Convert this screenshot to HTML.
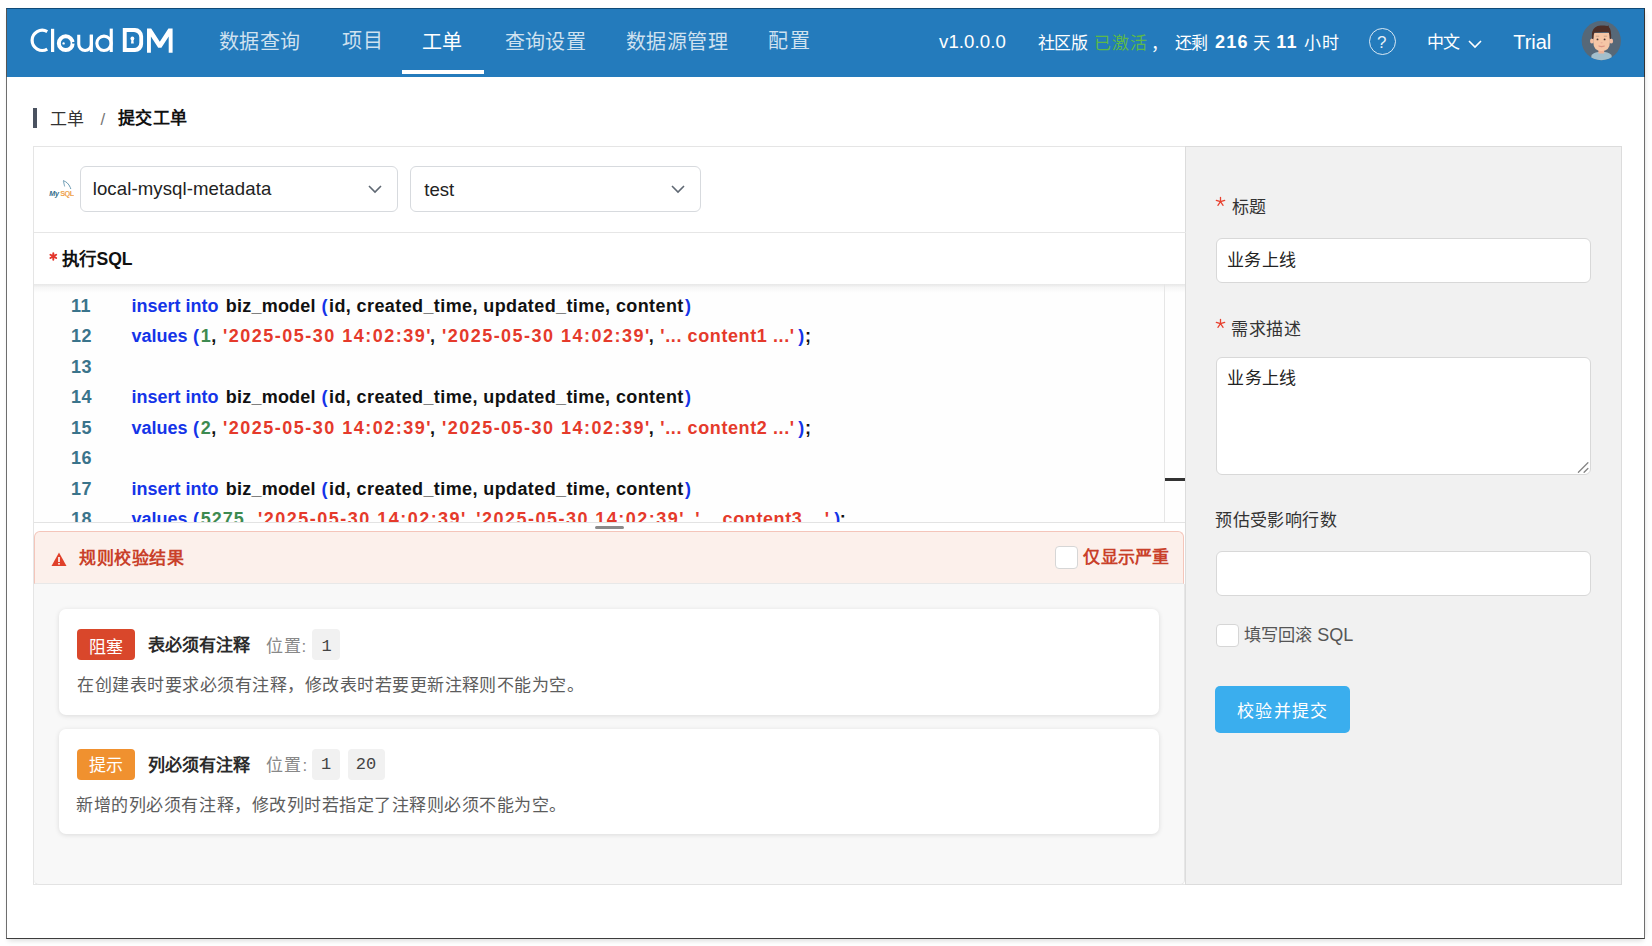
<!DOCTYPE html>
<html lang="zh-CN"><head><meta charset="utf-8">
<style>
*{box-sizing:border-box;margin:0;padding:0}
html,body{width:1652px;height:946px;overflow:hidden;background:#fff;font-family:"Liberation Sans",sans-serif;color:#222}
.a{position:absolute;white-space:nowrap;line-height:1}
.r{position:absolute}
</style></head><body>
<div class="r" style="left:6px;top:8px;width:1639px;height:931px;border:1px solid #6e6e6e;border-bottom:1.6px solid #3c3c3c;background:#fff;box-shadow:0 4px 5px -2px rgba(0,0,0,.13), 3px 0 5px -3px rgba(0,0,0,.1)"></div>
<div class="r" style="left:6px;top:8px;width:1639px;height:69px;background:#247bbc;border-top:1px solid #0f4a78;border-left:1px solid #555;border-right:1px solid #333"></div>
<svg class="a" style="left:28px;top:24px" width="152" height="32" viewBox="28 24 152 32">
<g fill="none" stroke="#fff">
<path d="M47.25 31.55 A10.1 10.1 0 1 0 47.25 49.05" stroke-width="3.2"/>
<circle cx="65.75" cy="43.2" r="6.9" stroke-width="4"/>
<path d="M78.75 34.7 V44.2 A6.3 6.3 0 0 0 91.35 44.2 V34.7" stroke-width="3.1"/>
<circle cx="104" cy="43.3" r="7.15" stroke-width="3.1"/>
</g>
<g fill="#fff">
<rect x="51" y="28.8" width="3.2" height="23.2"/>
<rect x="89.8" y="34.7" width="3.1" height="17.3"/>
<rect x="109.7" y="28.6" width="3.1" height="23.4"/>
<circle cx="63.6" cy="43.4" r="1.2"/>
<path fill-rule="evenodd" d="M122.8 28.1 H135 A8.1 8.1 0 0 1 143.1 36.2 V43.9 A8.1 8.1 0 0 1 135 52 H122.8 Z M126.7 32 H134 A5.3 5.3 0 0 1 139.3 37.3 V42.7 A5.3 5.3 0 0 1 134 48 H126.7 Z"/>
<circle cx="132.4" cy="38.5" r="1.9"/>
<path d="M131.5 39 H133.3 L133.8 43.6 H131 Z"/>
<path d="M147 52.8 V28.6 H151.2 L159.8 41.8 L168.4 28.6 H172.6 V52.8 H168.7 V36.5 L161.4 47.8 H158.2 L150.9 36.5 V52.8 Z"/>
</g>
<rect x="72.2" y="42" width="3" height="1.6" fill="#247bbc"/>
</svg>
<div class="a" style="left:218.66px;top:31.63px;font-size:20px;color:rgba(255,255,255,.78);font-weight:normal;letter-spacing:0.587px;">数据查询</div>
<div class="a" style="left:341.82px;top:31.23px;font-size:20px;color:rgba(255,255,255,.78);font-weight:normal;letter-spacing:0.960px;">项目</div>
<div class="a" style="left:422.48px;top:31.63px;font-size:20px;color:#fff;font-weight:normal;letter-spacing:-0.160px;">工单</div>
<div class="a" style="left:504.56px;top:31.63px;font-size:20px;color:rgba(255,255,255,.78);font-weight:normal;letter-spacing:0.320px;">查询设置</div>
<div class="a" style="left:625.94px;top:31.63px;font-size:20px;color:rgba(255,255,255,.78);font-weight:normal;letter-spacing:0.480px;">数据源管理</div>
<div class="a" style="left:768.48px;top:31.23px;font-size:20px;color:rgba(255,255,255,.78);font-weight:normal;letter-spacing:1.280px;">配置</div>
<div class="r" style="left:402px;top:70px;width:82px;height:4px;background:#fff"></div>
<div class="a" style="left:939.00px;top:33.36px;font-size:18.6px;color:#fff;font-weight:normal;letter-spacing:0.1px">v1.0.0.0</div>
<div class="a" style="left:1037.54px;top:35.07px;font-size:17px;color:#fff;font-weight:normal;letter-spacing:-0.160px;">社区版</div>
<div class="a" style="left:1094.12px;top:35.07px;font-size:17px;color:#5cb84a;font-weight:normal;letter-spacing:0.720px;">已激活</div>
<div class="a" style="left:1150.80px;top:35.71px;font-size:17px;color:#fff;font-weight:normal;">，</div>
<div class="a" style="left:1174.72px;top:35.47px;font-size:17px;color:#fff;font-weight:normal;letter-spacing:-0.480px;">还剩</div>
<div class="a" style="left:1215.00px;top:33.46px;font-size:18px;color:#fff;font-weight:bold;letter-spacing:1.3px">216</div>
<div class="a" style="left:1252.66px;top:34.50px;font-size:17.2px;color:#fff;font-weight:normal;">天</div>
<div class="a" style="left:1276.30px;top:33.46px;font-size:18px;color:#fff;font-weight:bold;letter-spacing:1.3px">11</div>
<div class="a" style="left:1304.00px;top:35.47px;font-size:17px;color:#fff;font-weight:normal;letter-spacing:0.640px;">小时</div>
<div class="r" style="left:1368.5px;top:27.8px;width:27.4px;height:27.4px;border:1.7px solid rgba(255,255,255,.82);border-radius:50%"></div>
<div class="a" style="left:1377.00px;top:33.61px;font-size:17px;color:rgba(255,255,255,.9);font-weight:normal;">?</div>
<div class="a" style="left:1426.56px;top:33.95px;font-size:17px;color:#fff;font-weight:normal;letter-spacing:-0.480px;">中文</div>
<svg class="a" style="left:1466px;top:37.5px" width="18" height="12" viewBox="0 0 18 12"><path d="M3 3 L9 9 L15 3" fill="none" stroke="#fff" stroke-width="1.6"/></svg>
<div class="a" style="left:1513.18px;top:31.53px;font-size:20px;color:#fff;font-weight:normal;">Trial</div>
<svg class="a" style="left:1581px;top:21px" width="40" height="40" viewBox="0 0 40 40">
<defs><clipPath id="cc"><circle cx="20.3" cy="19.7" r="19.6"/></clipPath></defs>
<circle cx="20.3" cy="19.7" r="19.6" fill="#566878"/>
<g clip-path="url(#cc)">
<path d="M9.5 40 L10.5 34.5 Q12 31.5 17 31 H24 Q29 31.5 30.5 34.5 L31.5 40 Z" fill="#a3bfcc"/>
<rect x="17.4" y="26" width="5.8" height="6.5" fill="#eeb296"/>
<ellipse cx="10.9" cy="20" rx="1.9" ry="2.6" fill="#f3bfa3"/>
<ellipse cx="30.2" cy="20" rx="1.9" ry="2.6" fill="#f3bfa3"/>
<path d="M12.4 12 H28.8 V22 Q28.8 29.9 20.6 29.9 Q12.4 29.9 12.4 22 Z" fill="#f6c6a6"/>
<path d="M11 18 Q10.2 9 14 6.5 Q17 4 21 4.6 Q24 4 26.5 5 L27.5 4.2 L28 6.3 Q30.6 8.5 30.1 18 L28.7 17.5 Q28.5 12.5 27.5 11 Q20 10.6 13.5 11.5 Q12.6 13 12.4 17.5 Z" fill="#4d2e27"/>
<path d="M14.8 15.2 H18.2 M22.8 15.2 H26.2" stroke="#c4a08a" stroke-width="0.9"/>
<circle cx="16.5" cy="18.4" r="0.95" fill="#4a3530"/><circle cx="23.6" cy="18.4" r="0.95" fill="#4a3530"/>
<ellipse cx="20.6" cy="21.8" rx="1.1" ry="0.8" fill="#eab09a"/>
<path d="M17.6 25 Q20.6 26.8 23.6 25 Q20.6 25.7 17.6 25 Z" fill="#d98f7f" stroke="#d98f7f" stroke-width="0.6"/>
</g></svg>
<div class="r" style="left:33px;top:108px;width:4.4px;height:20px;background:#4a5260"></div>
<div class="a" style="left:49.64px;top:110.71px;font-size:17px;color:#333;font-weight:normal;letter-spacing:0.000px;">工单</div>
<div class="a" style="left:100.50px;top:111.11px;font-size:17px;color:#777;font-weight:normal;">/</div>
<div class="a" style="left:118.00px;top:110.43px;font-size:17px;color:#111;font-weight:bold;letter-spacing:0.320px;">提交工单</div>
<div class="r" style="left:33px;top:146px;width:1153px;height:739px;border:1px solid #e5e5e5;border-right:none;background:#fff"></div>
<div class="r" style="left:1185px;top:146px;width:437px;height:739px;background:#f1f1f1;border:1px solid #dcdcdc"></div>
<svg class="a" style="left:48px;top:178px" width="26" height="22" viewBox="0 0 26 22">
<text x="1.3" y="17.8" font-family="Liberation Sans" font-size="7.2" font-style="italic" font-weight="bold" fill="#2f6d8c" letter-spacing="-0.3">My</text>
<text x="12.2" y="17.8" font-family="Liberation Sans" font-size="7.4" font-weight="bold" fill="#eea24e" letter-spacing="-0.5">SQL</text>
<path d="M15 2.6 Q20 4 22.3 9.5 L22.8 11" fill="none" stroke="#6a9ab3" stroke-width="1"/>
<path d="M15.3 3 Q16 5.5 16.7 8.5" fill="none" stroke="#8fb3c6" stroke-width="1.1"/>
</svg>
<div class="r" style="left:80px;top:166px;width:318px;height:46px;border:1px solid #d7dade;border-radius:6px;background:#fff"></div>
<div class="a" style="left:92.66px;top:180.30px;font-size:18.6px;color:#222;font-weight:normal;letter-spacing:0.1px">local-mysql-metadata</div>
<svg class="a" style="left:366px;top:182px" width="18" height="14" viewBox="0 0 18 14"><path d="M3 4 L9 10 L15 4" fill="none" stroke="#5f6873" stroke-width="1.6"/></svg>
<div class="r" style="left:410px;top:166px;width:291px;height:46px;border:1px solid #d7dade;border-radius:6px;background:#fff"></div>
<div class="a" style="left:424.26px;top:180.98px;font-size:18.6px;color:#222;font-weight:normal;">test</div>
<svg class="a" style="left:669px;top:182px" width="18" height="14" viewBox="0 0 18 14"><path d="M3 4 L9 10 L15 4" fill="none" stroke="#5f6873" stroke-width="1.6"/></svg>
<div class="r" style="left:34px;top:232px;width:1152px;height:1px;background:#e6e6e6"></div>
<svg class="a" style="left:0;top:0" width="1652" height="946" viewBox="0 0 1652 946"><path d="M53.30 256.40 L53.30 253.10 M53.30 256.40 L56.16 254.75 M53.30 256.40 L56.16 258.05 M53.30 256.40 L53.30 259.70 M53.30 256.40 L50.44 258.05 M53.30 256.40 L50.44 254.75 " stroke="#e3352b" stroke-width="1.9" stroke-linecap="round" fill="none"/></svg>
<div class="a" style="left:62.46px;top:251.11px;font-size:17.5px;color:#111;font-weight:bold;">执行<span style="font-size:17.6px">SQL</span></div>
<div class="r" style="left:34px;top:284px;width:1151px;height:239px;background:#fefefe;border-bottom:1px solid #e3e3e3;overflow:hidden">
<div class="r" style="left:0;top:0;width:1151px;height:9px;background:linear-gradient(rgba(0,0,0,.09),rgba(0,0,0,.03) 40%,rgba(0,0,0,0))"></div>
<div class="r" style="left:1130px;top:0;width:1px;height:239px;background:#e6e6e6"></div>
<div class="r" style="left:1131px;top:194px;width:20px;height:2.5px;background:#333"></div>
<div class="a" style="left:37.00px;top:12.86px;font-size:18px;color:#3a748b;font-weight:bold;letter-spacing:0.5px">11</div>
<div class="a" style="left:97.40px;top:12.86px;font-size:18px;color:#1434e8;font-weight:bold;letter-spacing:0px">insert into</div>
<div class="a" style="left:191.80px;top:12.86px;font-size:18px;color:#111;font-weight:bold;letter-spacing:0.22px">biz_model</div>
<div class="a" style="left:287.50px;top:12.86px;font-size:18px;color:#1434e8;font-weight:bold;letter-spacing:0px">(</div>
<div class="a" style="left:295.00px;top:12.86px;font-size:18px;color:#111;font-weight:bold;letter-spacing:0.4px">id, created_time, updated_time, content</div>
<div class="a" style="left:651.00px;top:12.86px;font-size:18px;color:#1434e8;font-weight:bold;letter-spacing:0px">)</div>
<div class="a" style="left:37.00px;top:43.31px;font-size:18px;color:#3a748b;font-weight:bold;letter-spacing:0.5px">12</div>
<div class="a" style="left:97.40px;top:43.31px;font-size:18px;color:#1434e8;font-weight:bold;letter-spacing:0px">values</div>
<div class="a" style="left:159.00px;top:43.31px;font-size:18px;color:#1434e8;font-weight:bold;letter-spacing:0px">(</div>
<div class="a" style="left:166.80px;top:43.31px;font-size:18px;color:#3d8a50;font-weight:bold;letter-spacing:0px">1</div>
<div class="a" style="left:177.30px;top:43.31px;font-size:18px;color:#111;font-weight:bold;letter-spacing:0px">,</div>
<div class="a" style="left:189.10px;top:43.31px;font-size:18px;color:#e53a2b;font-weight:bold;letter-spacing:1.485px">'2025-05-30 14:02:39'</div>
<div class="a" style="left:395.90px;top:43.31px;font-size:18px;color:#111;font-weight:bold;letter-spacing:0px">,</div>
<div class="a" style="left:407.90px;top:43.31px;font-size:18px;color:#e53a2b;font-weight:bold;letter-spacing:1.485px">'2025-05-30 14:02:39'</div>
<div class="a" style="left:614.70px;top:43.31px;font-size:18px;color:#111;font-weight:bold;letter-spacing:0px">,</div>
<div class="a" style="left:626.30px;top:43.31px;font-size:18px;color:#e53a2b;font-weight:bold;letter-spacing:0.6px">'... content1 ...'</div>
<div class="a" style="left:764.30px;top:43.31px;font-size:18px;color:#1434e8;font-weight:bold;letter-spacing:0px">)</div>
<div class="a" style="left:770.90px;top:43.31px;font-size:18px;color:#111;font-weight:bold;letter-spacing:0px">;</div>
<div class="a" style="left:37.00px;top:73.76px;font-size:18px;color:#3a748b;font-weight:bold;letter-spacing:0.5px">13</div>
<div class="a" style="left:37.00px;top:104.21px;font-size:18px;color:#3a748b;font-weight:bold;letter-spacing:0.5px">14</div>
<div class="a" style="left:97.40px;top:104.21px;font-size:18px;color:#1434e8;font-weight:bold;letter-spacing:0px">insert into</div>
<div class="a" style="left:191.80px;top:104.21px;font-size:18px;color:#111;font-weight:bold;letter-spacing:0.22px">biz_model</div>
<div class="a" style="left:287.50px;top:104.21px;font-size:18px;color:#1434e8;font-weight:bold;letter-spacing:0px">(</div>
<div class="a" style="left:295.00px;top:104.21px;font-size:18px;color:#111;font-weight:bold;letter-spacing:0.4px">id, created_time, updated_time, content</div>
<div class="a" style="left:651.00px;top:104.21px;font-size:18px;color:#1434e8;font-weight:bold;letter-spacing:0px">)</div>
<div class="a" style="left:37.00px;top:134.66px;font-size:18px;color:#3a748b;font-weight:bold;letter-spacing:0.5px">15</div>
<div class="a" style="left:97.40px;top:134.66px;font-size:18px;color:#1434e8;font-weight:bold;letter-spacing:0px">values</div>
<div class="a" style="left:159.00px;top:134.66px;font-size:18px;color:#1434e8;font-weight:bold;letter-spacing:0px">(</div>
<div class="a" style="left:166.80px;top:134.66px;font-size:18px;color:#3d8a50;font-weight:bold;letter-spacing:0px">2</div>
<div class="a" style="left:177.30px;top:134.66px;font-size:18px;color:#111;font-weight:bold;letter-spacing:0px">,</div>
<div class="a" style="left:189.10px;top:134.66px;font-size:18px;color:#e53a2b;font-weight:bold;letter-spacing:1.485px">'2025-05-30 14:02:39'</div>
<div class="a" style="left:395.90px;top:134.66px;font-size:18px;color:#111;font-weight:bold;letter-spacing:0px">,</div>
<div class="a" style="left:407.90px;top:134.66px;font-size:18px;color:#e53a2b;font-weight:bold;letter-spacing:1.485px">'2025-05-30 14:02:39'</div>
<div class="a" style="left:614.70px;top:134.66px;font-size:18px;color:#111;font-weight:bold;letter-spacing:0px">,</div>
<div class="a" style="left:626.30px;top:134.66px;font-size:18px;color:#e53a2b;font-weight:bold;letter-spacing:0.6px">'... content2 ...'</div>
<div class="a" style="left:764.30px;top:134.66px;font-size:18px;color:#1434e8;font-weight:bold;letter-spacing:0px">)</div>
<div class="a" style="left:770.90px;top:134.66px;font-size:18px;color:#111;font-weight:bold;letter-spacing:0px">;</div>
<div class="a" style="left:37.00px;top:165.11px;font-size:18px;color:#3a748b;font-weight:bold;letter-spacing:0.5px">16</div>
<div class="a" style="left:37.00px;top:195.56px;font-size:18px;color:#3a748b;font-weight:bold;letter-spacing:0.5px">17</div>
<div class="a" style="left:97.40px;top:195.56px;font-size:18px;color:#1434e8;font-weight:bold;letter-spacing:0px">insert into</div>
<div class="a" style="left:191.80px;top:195.56px;font-size:18px;color:#111;font-weight:bold;letter-spacing:0.22px">biz_model</div>
<div class="a" style="left:287.50px;top:195.56px;font-size:18px;color:#1434e8;font-weight:bold;letter-spacing:0px">(</div>
<div class="a" style="left:295.00px;top:195.56px;font-size:18px;color:#111;font-weight:bold;letter-spacing:0.4px">id, created_time, updated_time, content</div>
<div class="a" style="left:651.00px;top:195.56px;font-size:18px;color:#1434e8;font-weight:bold;letter-spacing:0px">)</div>
<div class="a" style="left:37.00px;top:226.01px;font-size:18px;color:#3a748b;font-weight:bold;letter-spacing:0.5px">18</div>
<div class="a" style="left:97.40px;top:226.01px;font-size:18px;color:#1434e8;font-weight:bold;letter-spacing:0px">values</div>
<div class="a" style="left:159.00px;top:226.01px;font-size:18px;color:#1434e8;font-weight:bold;letter-spacing:0px">(</div>
<div class="a" style="left:166.80px;top:226.01px;font-size:18px;color:#3d8a50;font-weight:bold;letter-spacing:1px">5275</div>
<div class="a" style="left:212.50px;top:226.01px;font-size:18px;color:#111;font-weight:bold;letter-spacing:0px">,</div>
<div class="a" style="left:224.00px;top:226.01px;font-size:18px;color:#e53a2b;font-weight:bold;letter-spacing:1.485px">'2025-05-30 14:02:39'</div>
<div class="a" style="left:430.80px;top:226.01px;font-size:18px;color:#111;font-weight:bold;letter-spacing:0px">,</div>
<div class="a" style="left:442.20px;top:226.01px;font-size:18px;color:#e53a2b;font-weight:bold;letter-spacing:1.485px">'2025-05-30 14:02:39'</div>
<div class="a" style="left:649.00px;top:226.01px;font-size:18px;color:#111;font-weight:bold;letter-spacing:0px">,</div>
<div class="a" style="left:661.30px;top:226.01px;font-size:18px;color:#e53a2b;font-weight:bold;letter-spacing:0.6px">'... content3 ...'</div>
<div class="a" style="left:800.20px;top:226.01px;font-size:18px;color:#1434e8;font-weight:bold;letter-spacing:0px">)</div>
<div class="a" style="left:805.70px;top:226.01px;font-size:18px;color:#111;font-weight:bold;letter-spacing:0px">;</div>
</div>
<div class="r" style="left:594.5px;top:525.5px;width:29px;height:3px;border-radius:2px;background:#8a8a8a"></div>
<div class="r" style="left:34px;top:531px;width:1150px;height:53px;background:#fcf0eb;border:1.5px solid #f4c5ba;border-bottom:1px solid #e8e8e8;border-radius:6px 6px 0 0"></div>
<svg class="a" style="left:51px;top:551px" width="16" height="16" viewBox="0 0 16 16"><path d="M8 1.5 L15.5 15 H0.5 Z" fill="#e0402a"/><rect x="7.2" y="6" width="1.6" height="5" fill="#fff"/><rect x="7.2" y="12" width="1.6" height="1.6" fill="#fff"/></svg>
<div class="a" style="left:79.28px;top:550.31px;font-size:17px;color:#c9402a;font-weight:bold;letter-spacing:0.512px;">规则校验结果</div>
<div class="r" style="left:1055px;top:546px;width:23px;height:23px;border:1px solid #d6d6d6;border-radius:4px;background:#fff"></div>
<div class="a" style="left:1083.28px;top:549.23px;font-size:17px;color:#c9402a;font-weight:bold;letter-spacing:0.280px;">仅显示严重</div>
<div class="r" style="left:34px;top:584px;width:1150.5px;height:301px;background:#f8f8f8;border-bottom:1px solid #e3e3e3;border-right:1px solid #e6e6e6;border-radius:0 0 5px 5px"></div>
<div class="r" style="left:59px;top:608.5px;width:1100px;height:106.5px;background:#fff;border-radius:7px;box-shadow:0 1px 5px rgba(0,0,0,.12)"></div>
<div class="r" style="left:76.8px;top:628.7px;width:58.1px;height:31.6px;background:#d9472b;border-radius:4px"></div>
<div class="a" style="left:88.64px;top:638.63px;font-size:17px;color:#fff;font-weight:normal;letter-spacing:0.320px;">阻塞</div>
<div class="a" style="left:147.72px;top:637.11px;font-size:17px;color:#2a2a2a;font-weight:bold;letter-spacing:0.128px;">表必须有注释</div>
<div class="a" style="left:266.00px;top:638.31px;font-size:17px;color:#888;font-weight:normal;letter-spacing:0.800px;">位置:</div>
<div class="r" style="left:312.1px;top:628.7px;width:27.5px;height:31.8px;background:#f1f1f1;border-radius:4px"></div>
<div class="a" style="left:321.42px;top:637.99px;font-size:17px;color:#444;font-weight:normal;font-family:'Liberation Mono',monospace">1</div>
<div class="a" style="left:77.44px;top:676.71px;font-size:17px;color:#5c5c5c;font-weight:normal;letter-spacing:0.480px;">在创建表时要求必须有注释，修改表时若要更新注释则不能为空。</div>
<div class="r" style="left:59px;top:728.5px;width:1100px;height:105px;background:#fff;border-radius:7px;box-shadow:0 1px 5px rgba(0,0,0,.12)"></div>
<div class="r" style="left:76.8px;top:748.7px;width:58.1px;height:31.6px;background:#f0912f;border-radius:4px"></div>
<div class="a" style="left:89.36px;top:756.67px;font-size:17px;color:#fff;font-weight:normal;letter-spacing:-0.160px;">提示</div>
<div class="a" style="left:147.80px;top:756.51px;font-size:17px;color:#2a2a2a;font-weight:bold;letter-spacing:0.032px;">列必须有注释</div>
<div class="a" style="left:266.00px;top:757.31px;font-size:17px;color:#888;font-weight:normal;letter-spacing:1.200px;">位置:</div>
<div class="r" style="left:312.1px;top:748.7px;width:27.5px;height:31.8px;background:#f1f1f1;border-radius:4px"></div>
<div class="a" style="left:320.94px;top:756.27px;font-size:17px;color:#444;font-weight:normal;font-family:'Liberation Mono',monospace">1</div>
<div class="r" style="left:348.0px;top:748.7px;width:36.8px;height:31.8px;background:#f1f1f1;border-radius:4px"></div>
<div class="a" style="left:355.76px;top:756.27px;font-size:17px;color:#444;font-weight:normal;font-family:'Liberation Mono',monospace">20</div>
<div class="a" style="left:76.40px;top:796.51px;font-size:17px;color:#5c5c5c;font-weight:normal;letter-spacing:0.516px;">新增的列必须有注释，修改列时若指定了注释则必须不能为空。</div>
<svg class="a" style="left:0;top:0" width="1652" height="946" viewBox="0 0 1652 946"><path d="M1220.50 201.70 L1220.50 197.30 M1220.50 201.70 L1224.68 200.34 M1220.50 201.70 L1223.09 205.26 M1220.50 201.70 L1217.91 205.26 M1220.50 201.70 L1216.32 200.34 " stroke="#e8412f" stroke-width="1.3" stroke-linecap="round" fill="none"/></svg>
<div class="a" style="left:1232.00px;top:198.53px;font-size:17px;color:#333;font-weight:normal;letter-spacing:0.480px;">标题</div>
<div class="r" style="left:1216px;top:238px;width:375px;height:45px;border:1px solid #d8d8d8;border-radius:6px;background:#fff"></div>
<div class="a" style="left:1227.28px;top:251.71px;font-size:17px;color:#222;font-weight:normal;letter-spacing:0.213px;">业务上线</div>
<svg class="a" style="left:0;top:0" width="1652" height="946" viewBox="0 0 1652 946"><path d="M1220.50 323.70 L1220.50 319.30 M1220.50 323.70 L1224.68 322.34 M1220.50 323.70 L1223.09 327.26 M1220.50 323.70 L1217.91 327.26 M1220.50 323.70 L1216.32 322.34 " stroke="#e8412f" stroke-width="1.3" stroke-linecap="round" fill="none"/></svg>
<div class="a" style="left:1230.94px;top:320.53px;font-size:17px;color:#333;font-weight:normal;letter-spacing:0.640px;">需求描述</div>
<div class="r" style="left:1216px;top:357px;width:375px;height:118px;border:1px solid #d8d8d8;border-radius:6px;background:#fff"></div>
<div class="a" style="left:1227.46px;top:369.51px;font-size:17px;color:#222;font-weight:normal;letter-spacing:0.160px;">业务上线</div>
<svg class="a" style="left:1576px;top:460px" width="14" height="14" viewBox="0 0 14 14"><path d="M2.4 12.3 L11.9 2.8 M8.1 12.3 L11.9 8.5" stroke="#858585" stroke-width="1.3" stroke-linecap="round"/></svg>
<div class="a" style="left:1215.46px;top:511.51px;font-size:17px;color:#333;font-weight:normal;letter-spacing:0.347px;">预估受影响行数</div>
<div class="r" style="left:1216px;top:550.5px;width:375px;height:45px;border:1px solid #d8d8d8;border-radius:6px;background:#fff"></div>
<div class="r" style="left:1216px;top:624px;width:23px;height:23px;border:1px solid #d6d6d6;border-radius:4px;background:#fff"></div>
<div class="a" style="left:1244.36px;top:625.72px;font-size:17.2px;color:#555;font-weight:normal;">填写回滚 <span style="font-size:18px">SQL</span></div>
<div class="r" style="left:1215px;top:686px;width:135px;height:47px;background:#3aaeee;border-radius:5px"></div>
<div class="a" style="left:1237.30px;top:702.67px;font-size:17px;color:#fff;font-weight:normal;letter-spacing:1.200px;">校验并提交</div>
</body></html>
